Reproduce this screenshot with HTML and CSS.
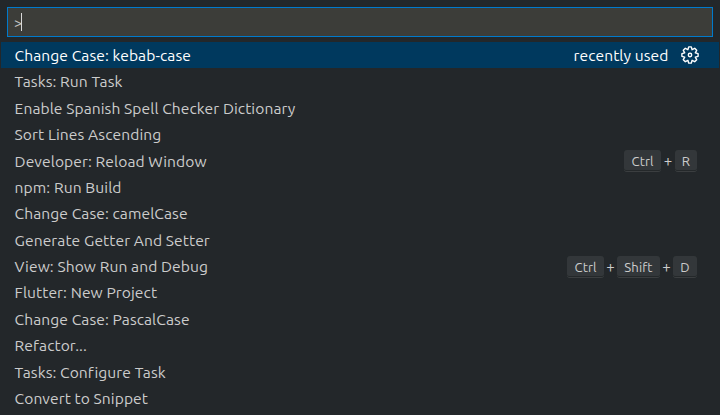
FILE: index.html
```
<!DOCTYPE html>
<html lang="en">
<head>
<meta charset="utf-8">
<title>Command Palette</title>
<link rel="stylesheet" href="styles.css">
</head>
<body>
<main class="palette">
  <div class="input"><span class="prompt">&gt;</span><span class="caret"></span></div>
  <ul class="list">
    <li class="row selected"><span class="label">Change Case: kebab-case</span><span class="hint">recently used</span>
      <svg class="gear" viewBox="-9 -9 18 18" fill="none" stroke="currentColor" stroke-width="1.4" stroke-linejoin="round"><path d="M-1.3-8.1H1.3L2.1-5.3 4.7-6.7 6.7-4.7 5.3-2.1 8.1-1.3V1.3L5.3 2.1 6.7 4.7 4.7 6.7 2.1 5.3 1.3 8.1H-1.3L-2.1 5.3-4.7 6.7-6.7 4.7-5.3 2.1-8.1 1.3V-1.3L-5.3-2.1-6.7-4.7-4.7-6.7-2.1-5.3z"/><circle r="1.7"/></svg></li>
    <li class="row"><span class="label">Tasks: Run Task</span></li>
    <li class="row"><span class="label">Enable Spanish Spell Checker Dictionary</span></li>
    <li class="row"><span class="label">Sort Lines Ascending</span></li>
    <li class="row"><span class="label">Developer: Reload Window</span><span class="keys"><kbd class="ctrl">Ctrl</kbd><span class="plus wide">+</span><kbd class="letter">R</kbd></span></li>
    <li class="row"><span class="label">npm: Run Build</span></li>
    <li class="row"><span class="label">Change Case: camelCase</span></li>
    <li class="row"><span class="label">Generate Getter And Setter</span></li>
    <li class="row"><span class="label">View: Show Run and Debug</span><span class="keys"><kbd class="ctrl">Ctrl</kbd><span class="plus">+</span><kbd class="shift">Shift</kbd><span class="plus">+</span><kbd class="letter-wide">D</kbd></span></li>
    <li class="row"><span class="label">Flutter: New Project</span></li>
    <li class="row"><span class="label">Change Case: PascalCase</span></li>
    <li class="row"><span class="label">Refactor...</span></li>
    <li class="row"><span class="label">Tasks: Configure Task</span></li>
    <li class="row"><span class="label">Convert to Snippet</span></li>
  </ul>
</main>
</body>
</html>
```
FILE: styles.css
```
* { box-sizing: border-box; }
body {
  margin: 0;
  height: 415px;
  overflow: hidden;
  background: #23272a;
  color: #cccccc;
  font: 15.6px/26.4px Ubuntu, "Noto Sans", sans-serif;
  letter-spacing: 0.08px;
}
.palette { padding: 7px 1px 0; }
.input {
  display: flex;
  align-items: center;
  height: 30px;
  margin: 0 6px;
  padding-left: 6px;
  border: 1px solid #007acc;
  background: #3c3d39;
}
.prompt { width: 7px; padding-top: 2px; font-size: 14.5px; color: #c4c4c4; }
.caret { width: 1px; height: 18px; background: #d8d8d8; }
.list { margin: 5px 0 0; padding: 0; list-style: none; }
.row {
  display: flex;
  align-items: center;
  height: 26.39px;
  padding: 0 22px 0 13.6px;
}
.selected { background: #00395e; color: #ffffff; padding-right: 20px; }
.label { flex: 1; padding-top: 0.2px; white-space: nowrap; }
.gear { width: 18px; height: 18px; margin-left: 12.5px; }
.keys { display: flex; align-items: center; padding-top: 1px; }
kbd {
  height: 22px;
  border-radius: 3px;
  border-bottom: 1px solid #3b3e40;
  background: #33373a;
  box-shadow: inset 0 -1px 0 #24282a;
  font: 13.2px/23px Ubuntu, "Noto Sans", sans-serif;
  text-align: center;
}
.ctrl { width: 37px; }
.shift { width: 43px; }
.letter { width: 22px; }
.letter-wide { width: 24px; }
.plus { width: 13px; padding-top: 1px; text-align: center; font-size: 15px; }
.wide { width: 14px; }
```
